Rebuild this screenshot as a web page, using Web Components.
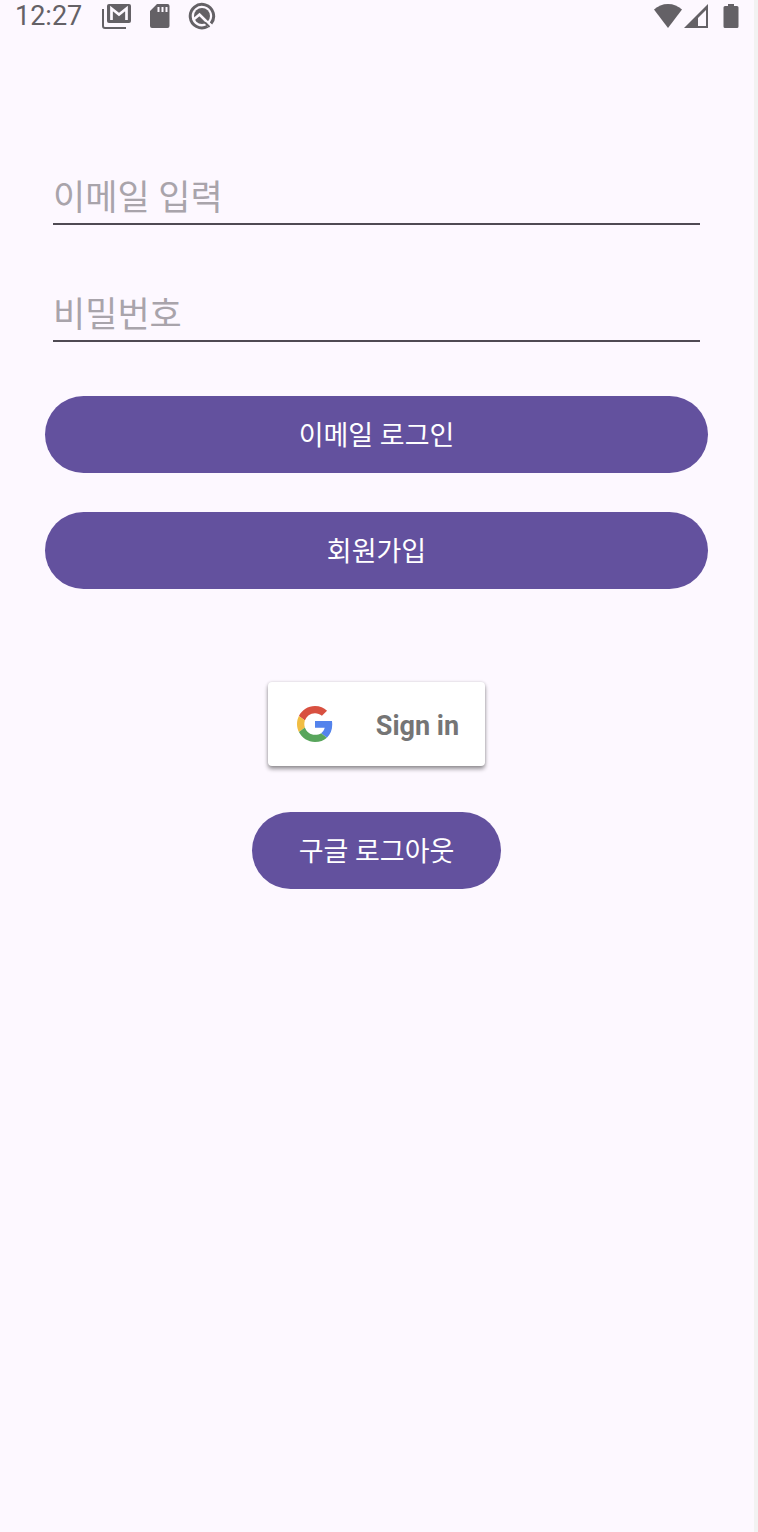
<!DOCTYPE html>
<html lang="ko">
<head>
<meta charset="utf-8">
<meta name="viewport" content="width=device-width, initial-scale=1">
<title>로그인</title>
<style>
  html { background: #f2f2f2; }
  body { margin: 0; font-family: Roboto, "Noto Sans CJK KR", sans-serif; }
</style>
</head>
<body>
<login-screen></login-screen>
<script>
const define = (name, html, setup) => {
  const template = document.createElement('template');
  template.innerHTML = html;
  customElements.define(name, class extends HTMLElement {
    constructor() {
      super();
      this.attachShadow({ mode: 'open' }).append(template.content.cloneNode(true));
    }
    connectedCallback() { if (setup) setup(this, this.shadowRoot); }
  });
};

define('status-bar', `
  <style>
    :host { display: flex; justify-content: space-between; align-items: center; height: 32px; padding: 0 15px; color: #646166; }
    .group { display: flex; align-items: center; height: 30px; }
    time { font-size: 27px; line-height: 32px; margin-right: 20px; }
    svg { display: block; fill: currentColor; }
    .card { margin: 0 17px; }
    .battery { margin-left: 14px; }
  </style>
  <div class="group">
    <time>12:27</time>
    <svg width="30" height="26" viewBox="0 0 30 26" aria-label="Gmail">
      <path d="M1 6v17a2 2 0 0 0 2 2h21" fill="none" stroke="currentColor" stroke-width="2"/>
      <rect x="5" y="1" width="24" height="19" rx="2"/>
      <path d="M9.500 17V5.500L17 11.500l7.500-6V17" fill="none" stroke="#fdf8ff" stroke-width="2.700"/>
    </svg>
    <svg class="card" width="22" height="26" viewBox="0 0 22 26" aria-label="SD">
      <path fill-rule="evenodd" d="M8 1h10.500a2 2 0 0 1 2 2v20a2 2 0 0 1-2 2H3a2 2 0 0 1-2-2V8zM8.500 4v5h2V4zm4 0v5h2V4zm4 0v5h2V4z"/>
    </svg>
    <svg width="28" height="28" viewBox="0 0 28 28" aria-label="알림">
      <path d="M23 21.500A11.700 11.700 0 1 0 19.500 24.400" fill="none" stroke="currentColor" stroke-width="3"/>
      <circle cx="14" cy="14" r="8"/>
      <path d="M5 18l6.500-5.500L23 24" fill="none" stroke="#fdf8ff" stroke-width="2.500"/>
      <path d="M17 20.500l4.500 4.500" fill="none" stroke="currentColor" stroke-width="2"/>
    </svg>
  </div>
  <div class="group">
    <svg width="30" height="26" viewBox="0 0 30 26" aria-label="Wi-Fi"><path d="M1 6.500C5 3 9.500 1 15 1s10 2 14 5.500L15 25z"/></svg>
    <svg width="26" height="26" viewBox="0 0 26 26" aria-label="신호"><path fill-rule="evenodd" d="M1 25L25 1v24zM15 15v8h8V7z"/></svg>
    <svg class="battery" width="16" height="26" viewBox="0 0 16 26" aria-label="배터리"><path d="M5 1h6v2h3a1.500 1.500 0 0 1 1.500 1.500v19A1.500 1.500 0 0 1 14 25H2a1.500 1.500 0 0 1-1.500-1.500v-19A1.500 1.500 0 0 1 2 3h3z"/></svg>
  </div>
`);

define('text-field', `
  <style>
    :host { display: block; padding: 0 8px; }
    input { display: block; box-sizing: border-box; width: 100%; height: 60px; margin: 0; padding: 8px 0 0; border: 0; border-bottom: 2px solid #4f4a53;
      border-radius: 0; background: transparent; outline: 0; font: inherit; font-size: 35px; color: #1d1b20; }
    input::placeholder { color: #a9a4ab; opacity: 1; }
  </style>
  <input>
`, (host, root) => {
  const input = root.querySelector('input');
  input.type = host.getAttribute('type');
  input.placeholder = host.getAttribute('label');
  input.setAttribute('aria-label', host.getAttribute('label'));
});

define('pill-button', `
  <style>
    :host { display: block; }
    button { display: block; width: 100%; height: 77px; margin: 0; padding: 0 47px 2px; border: 0; border-radius: 39px; background: #63519e;
      color: #fff; font: inherit; font-size: 27px; }
  </style>
  <button type="button"><slot></slot></button>
`);

define('google-button', `
  <style>
    :host { display: block; }
    button { display: flex; align-items: center; gap: 43px; height: 84px; margin: 0; padding: 0 26px 0 29px; border: 0; border-radius: 4px;
      background: #fff; box-shadow: 0 3px 4px rgba(0,0,0,.4), 0 0 3px rgba(0,0,0,.15); color: #757575; font: inherit; font-size: 27px; font-weight: 700; }
    svg { display: block; }
    span { padding-top: 3px; }
  </style>
  <button type="button">
    <svg width="36" height="36" viewBox="0 0 48 48" aria-hidden="true">
      <path fill="#d85040" d="M24 9.500c3.540 0 6.710 1.220 9.210 3.600l6.850-6.850C35.900 2.380 30.470 0 24 0 14.620 0 6.510 5.380 2.560 13.220l7.980 6.190C12.430 13.720 17.740 9.500 24 9.500z"/>
      <path fill="#5383ec" d="M46.980 24.550c0-1.570-.15-3.090-.38-4.550H24v9.020h12.940c-.58 2.960-2.260 5.480-4.780 7.180l7.730 6c4.510-4.180 7.090-10.360 7.090-17.650z"/>
      <path fill="#f1bd42" d="M10.530 28.590c-.48-1.450-.76-2.990-.76-4.590s.27-3.140.76-4.590l-7.980-6.190C.92 16.460 0 20.120 0 24c0 3.880.92 7.540 2.560 10.780l7.970-6.190z"/>
      <path fill="#58a55c" d="M24 48c6.480 0 11.930-2.130 15.890-5.810l-7.730-6c-2.150 1.450-4.920 2.300-8.160 2.300-6.260 0-11.570-4.220-13.470-9.910l-7.980 6.190C6.510 42.620 14.620 48 24 48z"/>
    </svg>
    <span><slot></slot></span>
  </button>
`);

define('login-screen', `
  <style>
    :host { display: block; box-sizing: border-box; min-height: 100vh; margin-right: 4px; background: #fdf8ff; }
    form { display: flex; flex-direction: column; padding: 133px 46px 48px 45px; }
    .fields { display: grid; gap: 57px; }
    .actions { display: grid; gap: 39px; margin-top: 54px; }
    .google { display: grid; justify-items: center; gap: 46px; margin-top: 93px; }
  </style>
  <status-bar></status-bar>
  <form>
    <div class="fields">
      <text-field type="email" label="이메일 입력"></text-field>
      <text-field type="password" label="비밀번호"></text-field>
    </div>
    <div class="actions">
      <pill-button>이메일 로그인</pill-button>
      <pill-button>회원가입</pill-button>
    </div>
    <div class="google">
      <google-button>Sign in</google-button>
      <pill-button>구글 로그아웃</pill-button>
    </div>
  </form>
`);
</script>
</body>
</html>
